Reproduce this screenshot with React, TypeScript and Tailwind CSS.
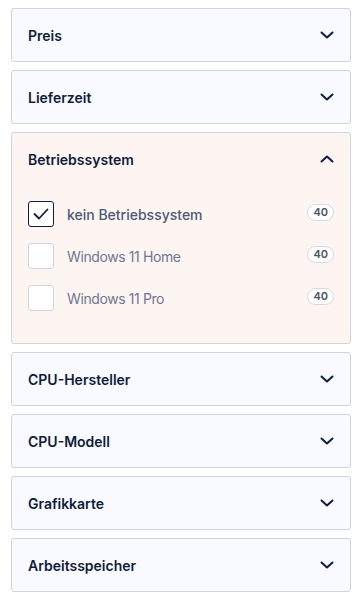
import React, { useState } from "react";

interface Option {
  label: string;
  count: number;
}

interface Section {
  title: string;
  options?: Option[];
}

const sections: Section[] = [
  { title: "Preis" },
  { title: "Lieferzeit" },
  {
    title: "Betriebssystem",
    options: [
      { label: "kein Betriebssystem", count: 40 },
      { label: "Windows 11 Home", count: 40 },
      { label: "Windows 11 Pro", count: 40 },
    ],
  },
  { title: "CPU-Hersteller" },
  { title: "CPU-Modell" },
  { title: "Grafikkarte" },
  { title: "Arbeitsspeicher" },
];

const Chevron: React.FC<{ up?: boolean }> = ({ up }) => (
  <svg width="14" height="8" viewBox="0 0 14 8" fill="none" className={up ? "rotate-180" : ""}>
    <path d="M1.5 1.5L7 6.5L12.5 1.5" stroke="#0b1f44" strokeWidth="2" strokeLinecap="round" strokeLinejoin="round" />
  </svg>
);

const FilterSection: React.FC<{ section: Section; open: boolean; onToggle: () => void }> = ({
  section,
  open,
  onToggle,
}) => {
  const [checked, setChecked] = useState<string[]>(["kein Betriebssystem"]);

  const toggle = (label: string) =>
    setChecked((c) => (c.includes(label) ? c.filter((l) => l !== label) : [...c, label]));

  return (
    <div className={`border border-[#cfd4dd] rounded-[3px] ${open ? "bg-[#fdf5f2]" : "bg-[#f8faff]"}`}>
      <button
        onClick={onToggle}
        className="w-full h-[52px] flex items-center justify-between pl-4 pr-[16px] text-left"
      >
        <span className="text-[14px] font-semibold text-[#0f1d3a]">{section.title}</span>
        <Chevron up={open} />
      </button>
      {open && section.options && (
        <div className="flex flex-col gap-4 pl-4 pr-[16px] pt-4 pb-8">
          {section.options.map((o) => {
            const on = checked.includes(o.label);
            return (
              <label key={o.label} className="flex items-center cursor-pointer" onClick={() => toggle(o.label)}>
                <span
                  className={`w-[26px] h-[26px] rounded-[3px] flex items-center justify-center bg-white border ${
                    on ? "border-[#0f1d3a] border-[1.5px]" : "border-[#cfd4dd]"
                  }`}
                >
                  {on && (
                    <svg width="16" height="12" viewBox="0 0 16 12" fill="none">
                      <path d="M1.5 6L6 10.5L14.5 1.5" stroke="#0f1d3a" strokeWidth="1.8" strokeLinecap="round" strokeLinejoin="round" />
                    </svg>
                  )}
                </span>
                <span
                  className={`ml-[13px] flex-1 text-[14px] ${
                    on ? "font-medium text-[#4b5a78]" : "text-[#6e7890] tracking-[-0.4px]"
                  }`}
                >
                  {o.label}
                </span>
                <span className="-mt-1 h-[17px] px-[5px] rounded-full border border-[#d4d8e0] bg-white text-[11px] font-semibold text-[#4b5466] flex items-center leading-none">
                  {o.count}
                </span>
              </label>
            );
          })}
        </div>
      )}
    </div>
  );
};

export default function App() {
  const [openIdx, setOpenIdx] = useState<number | null>(2);

  return (
    <div className="bg-white min-h-screen pl-[11px] pr-[9px] pt-2 pb-2 flex flex-col gap-2" style={{ fontFamily: "Inter, 'Noto Sans', sans-serif" }}>
      {sections.map((s, i) => (
        <FilterSection
          key={s.title}
          section={s}
          open={openIdx === i}
          onToggle={() => setOpenIdx(openIdx === i ? null : i)}
        />
      ))}
    </div>
  );
}
